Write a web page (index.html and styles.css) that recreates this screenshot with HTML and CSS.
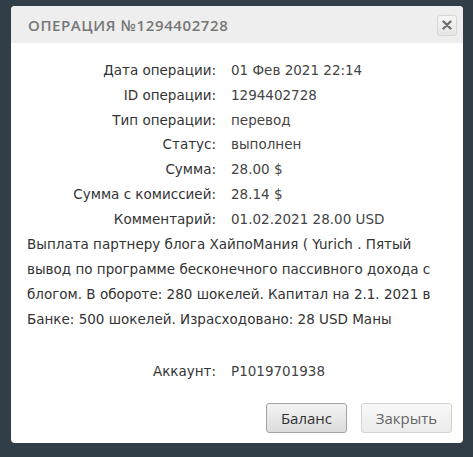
FILE: index.html
```
<!DOCTYPE html>
<html lang="ru">
<head>
<meta charset="utf-8">
<link rel="stylesheet" href="styles.css">
</head>
<body>
<div class="dialog">
  <div class="header">
    <span class="title">Операция №1294402728</span>
    <button class="close" aria-label="close">
      <svg width="10" height="10" viewBox="0 0 10 10"><path d="M1.5 1.5 L8.5 8.5 M8.5 1.5 L1.5 8.5" stroke="#6f6f6f" stroke-width="2.4" stroke-linecap="round"/></svg>
    </button>
  </div>
  <div class="body">
    <div class="details">
      <span class="lbl">Дата операции:</span><span class="val">01 Фев 2021 22:14</span>
      <span class="lbl">ID операции:</span><span class="val">1294402728</span>
      <span class="lbl">Тип операции:</span><span class="val">перевод</span>
      <span class="lbl">Статус:</span><span class="val">выполнен</span>
      <span class="lbl">Сумма:</span><span class="val">28.00 $</span>
      <span class="lbl">Сумма с комиссией:</span><span class="val">28.14 $</span>
      <span class="lbl">Комментарий:</span><span class="val">01.02.2021 28.00 USD</span>
    </div>
    <p class="comment">Выплата партнеру блога ХайпоМания ( Yurich . Пятый вывод по программе бесконечного пассивного дохода с блогом. В обороте: 280 шокелей. Капитал на 2.1. 2021 в Банке: 500 шокелей. Израсходовано: 28 USD Маны</p>
    <div class="details account">
      <span class="lbl">Аккаунт:</span><span class="val">P1019701938</span>
    </div>
  </div>
  <div class="footer">
    <button class="btn btn-primary">Баланс</button>
    <button class="btn btn-light">Закрыть</button>
  </div>
</div>
</body>
</html>
```
FILE: styles.css
```
html, body {
  margin: 0;
  padding: 0;
}
body {
  background: #313e47;
  width: 473px;
  height: 457px;
  overflow: hidden;
  font-family: "DejaVu Sans", "Open Sans", sans-serif;
  font-size: 13.5px;
  color: #333;
}
.dialog {
  margin: 6px 0 0 11px;
  width: 452px;
  height: 437px;
  background: #fff;
  border-radius: 4px;
  overflow: hidden;
  display: flex;
  flex-direction: column;
}
.header {
  height: 37px;
  background: #eeeeee;
  display: flex;
  align-items: center;
  justify-content: space-between;
  padding: 0 6px 0 17px;
  box-sizing: border-box;
}
.title {
  font-family: "Open Sans", sans-serif;
  text-transform: uppercase;
  font-size: 15px;
  font-weight: 600;
  letter-spacing: 0.6px;
  color: #777;
}
.close {
  width: 20px;
  height: 21px;
  padding: 0;
  margin-top: 1px;
  border: 1px solid #d6d6d6;
  border-radius: 3px;
  background: linear-gradient(#f6f6f6, #e6e6e6);
  display: flex;
  align-items: center;
  justify-content: center;
}
.body {
  padding: 15px 16px 0 16px;
  flex: 1;
}
.details {
  display: grid;
  grid-template-columns: 189px 1fr;
  column-gap: 15px;
  line-height: 24.8px;
}
.lbl {
  text-align: right;
  color: #333;
}
.val {
  color: #444;
}
.comment {
  margin: 0;
  line-height: 25.2px;
  color: #333;
}
.account {
  margin-top: 27px;
}
.footer {
  display: flex;
  justify-content: flex-end;
  gap: 14px;
  padding: 0 11px 10px 0;
}
.btn {
  height: 30px;
  border-radius: 3px;
  font-family: "Open Sans", "Noto Sans", sans-serif;
  font-size: 15px;
  padding: 0;
}
.btn-primary {
  width: 81px;
  border: 1px solid #a3a3a3;
  background: linear-gradient(#f4f4f4, #dcdcdc);
  color: #333;
}
.btn-light {
  width: 91px;
  border: 1px solid #d4d4d4;
  background: linear-gradient(#f8f8f8, #ececec);
  color: #666;
}
```
